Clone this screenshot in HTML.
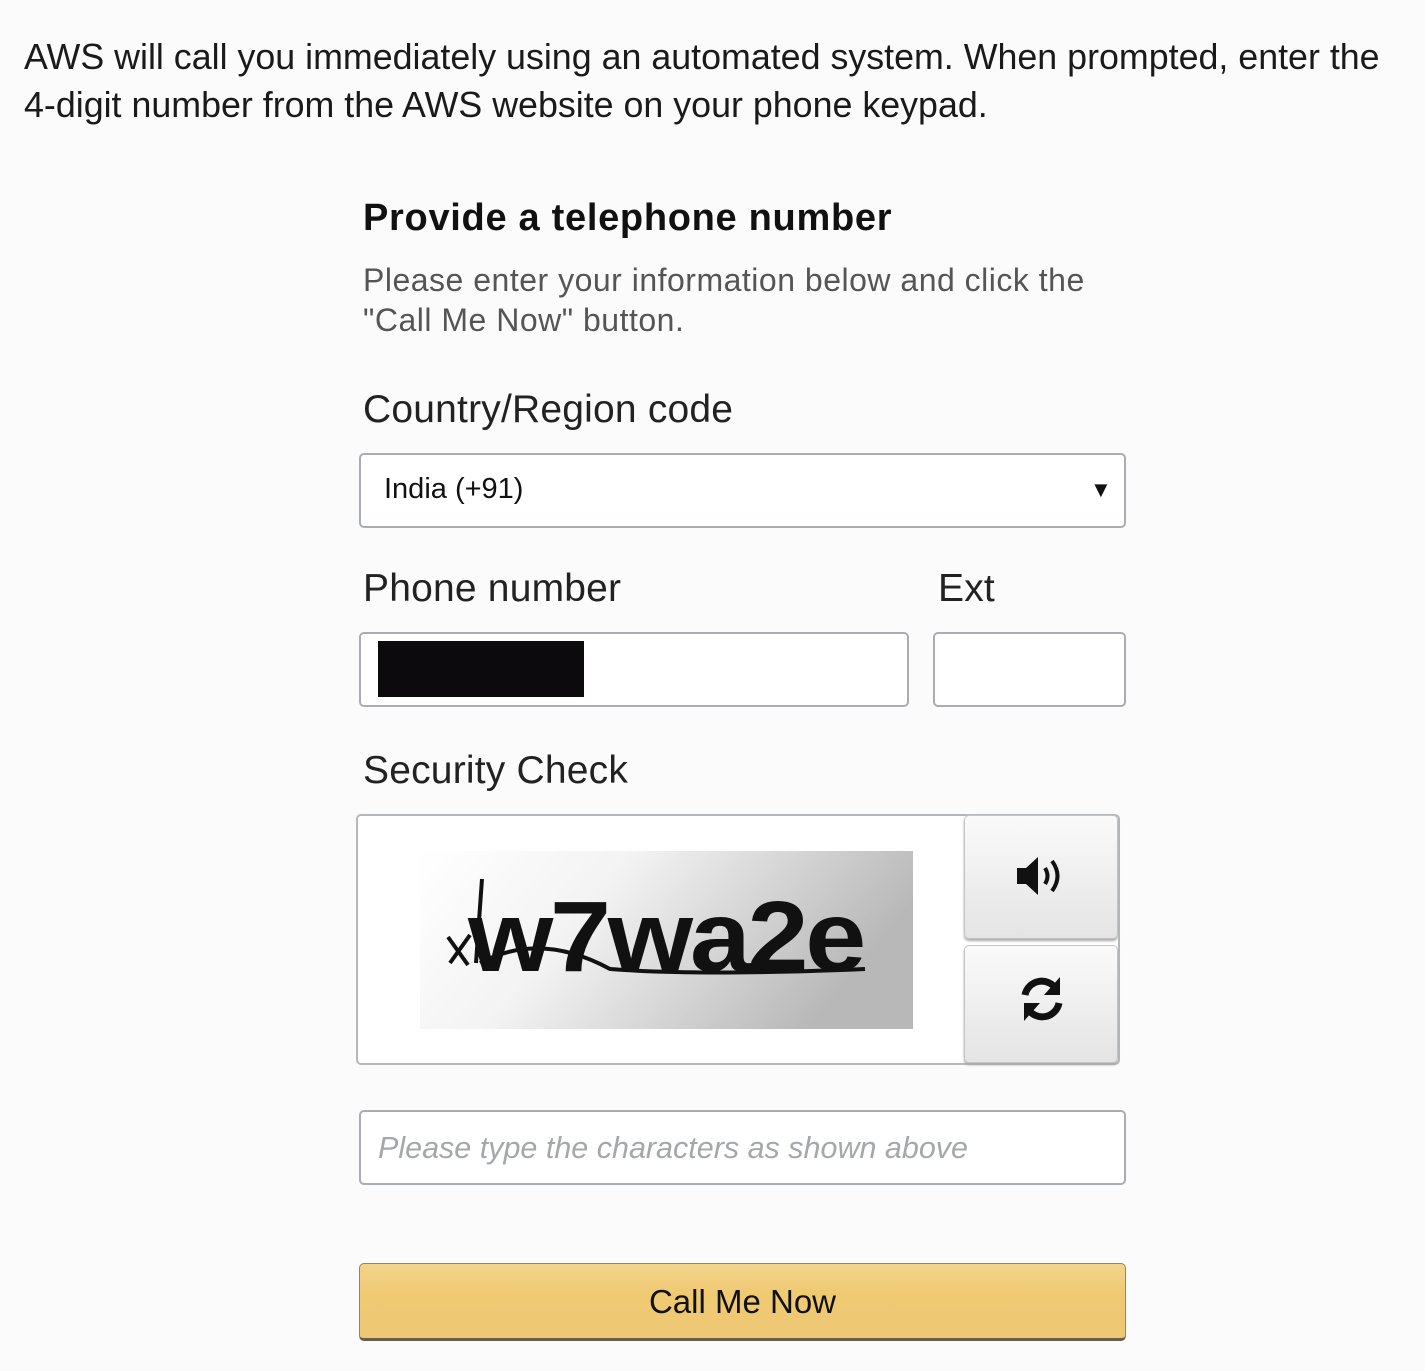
<!DOCTYPE html>
<html><head><meta charset="utf-8">
<style>
html,body{margin:0;padding:0;background:#fbfbfb;}
body{width:1425px;height:1371px;position:relative;overflow:hidden;font-family:"Liberation Sans",Arial,sans-serif;color:#111;}
.a{position:absolute;white-space:nowrap;}
.box{position:absolute;background:#fff;border:2px solid #a9adb2;border-radius:5px;box-sizing:border-box;}
.lbl{font-size:39px;letter-spacing:0.2px;color:#222}
</style></head><body>
<div class="a" style="left:24px;top:33px;font-size:35.8px;line-height:48px;color:#1a1a1a">AWS will call you immediately using an automated system. When prompted, enter the<br>4-digit number from the AWS website on your phone keypad.</div>

<div class="a" style="left:363px;top:197px;font-size:38px;letter-spacing:0.7px;font-weight:bold;color:#111">Provide a telephone number</div>
<div class="a" style="left:363px;top:260px;font-size:32px;letter-spacing:0.5px;line-height:40px;color:#555">Please enter your information below and click the<br>"Call Me Now" button.</div>

<div class="a lbl" style="left:363px;top:388px;">Country/Region code</div>
<div class="box" style="left:359px;top:453px;width:767px;height:75px;"></div>
<div class="a" style="left:384px;top:473px;font-size:29px;color:#111">India (+91)</div>
<div class="a" style="left:1090px;top:477px;font-size:22px;color:#111">▼</div>

<div class="a lbl" style="left:363px;top:567px;">Phone number</div>
<div class="a lbl" style="left:938px;top:567px;">Ext</div>
<div class="box" style="left:359px;top:632px;width:550px;height:75px;"></div>
<div class="a" style="left:378px;top:641px;width:206px;height:56px;background:#0c0a0c"></div>
<div class="box" style="left:933px;top:632px;width:193px;height:75px;"></div>

<div class="a lbl" style="left:363px;top:749px;">Security Check</div>
<div class="box" style="left:356px;top:814px;width:764px;height:251px;border-color:#b5b8bb"></div>
<svg class="a" style="left:420px;top:851px" width="493" height="178">
<defs><linearGradient id="g" x1="0" x2="1" y1="0" y2="0.3">
<stop offset="0" stop-color="#fff"/><stop offset="0.4" stop-color="#f3f3f3"/><stop offset="1" stop-color="#b8b8b8"/></linearGradient></defs>
<rect x="0" y="0" width="493" height="178" fill="url(#g)"/>
<text x="48" y="120" font-family="Liberation Sans" font-weight="bold" font-size="100" fill="#111" letter-spacing="-3" textLength="395" lengthAdjust="spacingAndGlyphs">w7wa2e</text>
<path d="M28 86 L48 114 M50 84 L30 112 M62 28 L56 112" stroke="#111" stroke-width="4" fill="none"/>
<path d="M60 112 Q120 80 190 118 Q280 125 445 118" stroke="#111" stroke-width="4" fill="none"/>
</svg>
<div class="a" style="left:964px;top:815px;width:154px;height:124px;background:linear-gradient(#fafafa,#e4e4e4);border:1px solid #c4c4c4;border-radius:5px;box-sizing:border-box;box-shadow:0 2px 2px #aaa"></div>
<svg class="a" style="left:1014px;top:853px" width="56" height="46" viewBox="0 0 56 46">
<path d="M3 15 H12 L24 4 V42 L12 31 H3 Z" fill="#111"/>
<path d="M31 15 Q36 23 31 31" stroke="#111" stroke-width="4" fill="none"/>
<path d="M38 8 Q49 23 38 38" stroke="#111" stroke-width="4" fill="none"/>
</svg>
<div class="a" style="left:964px;top:945px;width:154px;height:118px;background:linear-gradient(#fafafa,#e4e4e4);border:1px solid #c4c4c4;border-radius:5px;box-sizing:border-box;box-shadow:0 2px 2px #aaa"></div>
<svg class="a" style="left:1016px;top:973px" width="52" height="52" viewBox="0 0 52 52">
<path d="M9 22 A17 17 0 0 1 40 16" stroke="#111" stroke-width="7" fill="none"/>
<path d="M44 4 V22 H28 Z" fill="#111"/>
<path d="M43 30 A17 17 0 0 1 12 36" stroke="#111" stroke-width="7" fill="none"/>
<path d="M8 48 V30 H24 Z" fill="#111"/>
</svg>

<div class="box" style="left:359px;top:1110px;width:767px;height:75px;"></div>
<div class="a" style="left:378px;top:1131px;font-size:30.5px;font-style:italic;color:#a4a7ab">Please type the characters as shown above</div>

<div class="a" style="left:359px;top:1263px;width:767px;height:78px;background:linear-gradient(#f3d48c,#f0c973 40%,#eec874);border:1px solid #9c8550;border-bottom:3px solid #6b5e48;border-radius:5px;box-sizing:border-box"></div>
<div class="a" style="left:359px;top:1283px;width:767px;text-align:center;font-size:33px;color:#111">Call Me Now</div>
</body></html>
